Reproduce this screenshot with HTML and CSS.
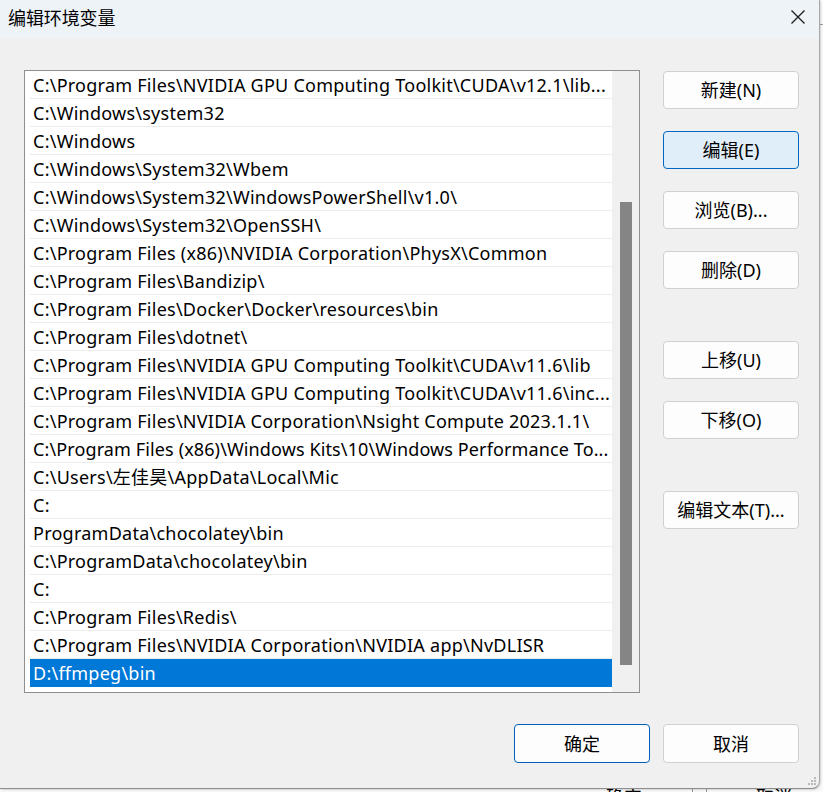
FILE: index.html
```html
<!DOCTYPE html>
<html lang="zh-CN">
<head>
<meta charset="utf-8">
<title>编辑环境变量</title>
<link rel="stylesheet" href="styles.css">
</head>
<body>
<div class="backdrop">
  <span class="bg-text bg-ok">确定</span>
  <span class="bg-line bg-line1"></span>
  <span class="bg-line bg-line2"></span>
  <span class="bg-text bg-cancel">取消</span>
  <span class="bg-hline"></span>
</div>
<div class="dialog">
  <div class="titlebar">
    <span class="title">编辑环境变量</span>
    <span class="close">
      <svg width="16" height="16" viewBox="0 0 16 16"><path d="M1.5 1.5 L14.5 14.5 M14.5 1.5 L1.5 14.5" stroke="#1b1b1b" stroke-width="1.3" fill="none"/></svg>
    </span>
  </div>
  <div class="body">
    <div class="main">
      <div class="listbox">
        <div class="rows">
          <div class="row">C:\Program Files\NVIDIA GPU Computing Toolkit\CUDA\v12.1\lib...</div>
          <div class="row">C:\Windows\system32</div>
          <div class="row">C:\Windows</div>
          <div class="row">C:\Windows\System32\Wbem</div>
          <div class="row">C:\Windows\System32\WindowsPowerShell\v1.0\</div>
          <div class="row">C:\Windows\System32\OpenSSH\</div>
          <div class="row">C:\Program Files (x86)\NVIDIA Corporation\PhysX\Common</div>
          <div class="row">C:\Program Files\Bandizip\</div>
          <div class="row">C:\Program Files\Docker\Docker\resources\bin</div>
          <div class="row">C:\Program Files\dotnet\</div>
          <div class="row">C:\Program Files\NVIDIA GPU Computing Toolkit\CUDA\v11.6\lib</div>
          <div class="row">C:\Program Files\NVIDIA GPU Computing Toolkit\CUDA\v11.6\inc...</div>
          <div class="row">C:\Program Files\NVIDIA Corporation\Nsight Compute 2023.1.1\</div>
          <div class="row tight">C:\Program Files (x86)\Windows Kits\10\Windows Performance To...</div>
          <div class="row">C:\Users\左佳昊\AppData\Local\Mic</div>
          <div class="row">C:</div>
          <div class="row">ProgramData\chocolatey\bin</div>
          <div class="row">C:\ProgramData\chocolatey\bin</div>
          <div class="row">C:</div>
          <div class="row">C:\Program Files\Redis\</div>
          <div class="row">C:\Program Files\NVIDIA Corporation\NVIDIA app\NvDLISR</div>
          <div class="row selected">D:\ffmpeg\bin</div>
        </div>
        <div class="scrolltrack"><div class="thumb"></div></div>
      </div>
      <div class="side">
        <button class="btn">新建(N)</button>
        <button class="btn focus">编辑(E)</button>
        <button class="btn">浏览(B)...</button>
        <button class="btn">删除(D)</button>
        <button class="btn group">上移(U)</button>
        <button class="btn">下移(O)</button>
        <button class="btn group">编辑文本(T)...</button>
      </div>
    </div>
    <div class="footer">
      <button class="btn default">确定</button>
      <button class="btn">取消</button>
    </div>
  </div>
  <svg class="grip" width="10" height="10" viewBox="0 0 10 10">
    <rect x="7" y="1" width="2" height="2" fill="#b9b9b9"/>
    <rect x="4" y="4" width="2" height="2" fill="#b9b9b9"/>
    <rect x="7" y="4" width="2" height="2" fill="#b9b9b9"/>
    <rect x="1" y="7" width="2" height="2" fill="#b9b9b9"/>
    <rect x="4" y="7" width="2" height="2" fill="#b9b9b9"/>
    <rect x="7" y="7" width="2" height="2" fill="#b9b9b9"/>
  </svg>
</div>
</body>
</html>
```
FILE: styles.css
```css
* { box-sizing: border-box; }
html, body { margin: 0; padding: 0; }
body {
  width: 823px;
  height: 792px;
  background: #f7f7f7;
  position: relative;
  overflow: hidden;
  font-family: "Noto Sans", "Noto Sans CJK SC", sans-serif;
  color: #000;
}
.backdrop {
  position: absolute;
  left: 0; top: 0; width: 823px; height: 792px;
  background: #f9f9f9;
}
.bg-text {
  position: absolute;
  top: 786px;
  font-size: 18px;
  line-height: 20px;
  font-family: "Noto Sans CJK SC", sans-serif;
}
.bg-ok { left: 606px; }
.bg-cancel { left: 756px; }
.bg-line { position: absolute; top: 780px; width: 1px; height: 12px; background: #9a9a9a; }
.bg-line1 { left: 692px; }
.bg-line2 { left: 706px; }
.bg-hline { position: absolute; left: 818px; top: 24px; width: 5px; height: 1px; background: #a0a0a0; }

.dialog {
  position: absolute;
  left: 0; top: 0;
  width: 820px;
  height: 789px;
  background: #f0f0f0;
  border-right: 1px solid #a8a8a8;
  border-bottom: 1px solid #8e8e8e;
  border-bottom-right-radius: 8px;
  box-shadow: 1px 1px 2px rgba(0,0,0,0.15);
  display: flex;
  flex-direction: column;
  overflow: hidden;
}
.titlebar {
  height: 38px;
  flex: none;
  background: #eef3f8;
  display: flex;
  align-items: center;
  justify-content: space-between;
  padding: 0 13px 0 8px;
}
.title {
  font-family: "Noto Sans CJK SC", sans-serif;
  font-size: 18px;
  line-height: 24px;
  margin-top: -4px;
  letter-spacing: -0.1px;
}
.close { display: flex; width: 16px; height: 16px; margin-top: -4px; }

.body {
  padding: 32px 0 0 24px;
  display: flex;
  flex-direction: column;
}
.main { display: flex; }
.listbox {
  width: 616px;
  height: 623px;
  border: 1px solid #8f8f8f;
  background: #fff;
  display: flex;
  padding-left: 5px;
}
.rows { width: 582px; display: flex; flex-direction: column; }
.row {
  height: 28px;
  line-height: 28px;
  border-bottom: 1px solid #ececec;
  padding-left: 3px;
  font-size: 18px;
  white-space: nowrap;
  overflow: hidden;
  letter-spacing: 0.25px;
}
.row.tight { letter-spacing: 0.12px; }
.row.selected {
  background: #0078d7;
  color: #fff;
  border-bottom-color: #0078d7;
}
.scrolltrack {
  width: 27px;
  background: #f0f0f0;
  display: flex;
  flex-direction: column;
  padding: 131px 7px 27px 8px;
}
.thumb { flex: 1; background: #858585; }

.side {
  margin-left: 23px;
  padding-top: 1px;
  display: flex;
  flex-direction: column;
  gap: 22px;
}
.btn {
  width: 136px;
  height: 38px;
  border: 1px solid #d0d0d0;
  border-radius: 4px;
  background: #fdfdfd;
  font-family: "Noto Sans", "Noto Sans CJK SC", sans-serif;
  font-size: 18px;
  color: #000;
  padding: 0;
  line-height: 36px;
}
.btn.focus { background: #e0eef9; border-color: #0067c0; }
.btn.group { margin-top: 30px; }
.btn.default { background: #fdfdfd; border-color: #005fb8; }
.footer {
  margin-top: 31px;
  padding-left: 490px;
  display: flex;
  gap: 13px;
}
.footer .btn { height: 39px; }
.grip { position: absolute; right: 2px; bottom: 2px; }
```
